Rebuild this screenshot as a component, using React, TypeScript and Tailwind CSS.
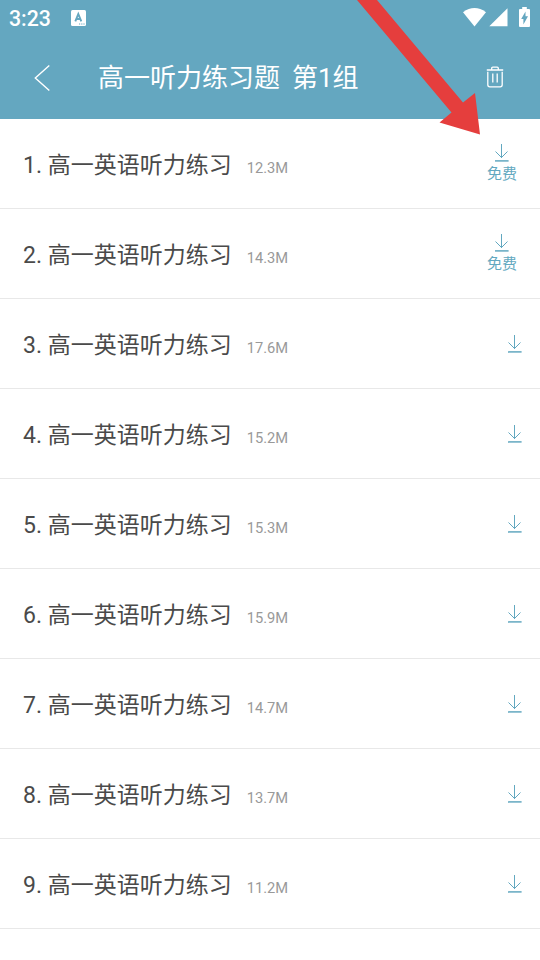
import React from "react";

type Track = {
  id: number;
  title: string;
  size: string;
  free?: boolean;
};

const tracks: Track[] = [
  { id: 1, title: "高一英语听力练习", size: "12.3M", free: true },
  { id: 2, title: "高一英语听力练习", size: "14.3M", free: true },
  { id: 3, title: "高一英语听力练习", size: "17.6M" },
  { id: 4, title: "高一英语听力练习", size: "15.2M" },
  { id: 5, title: "高一英语听力练习", size: "15.3M" },
  { id: 6, title: "高一英语听力练习", size: "15.9M" },
  { id: 7, title: "高一英语听力练习", size: "14.7M" },
  { id: 8, title: "高一英语听力练习", size: "13.7M" },
  { id: 9, title: "高一英语听力练习", size: "11.2M" },
];

const DownloadIcon: React.FC = () => (
  <svg width="14" height="18" viewBox="0 0 14 18" fill="none" stroke="#62a8c0">
    <path d="M6.5 0V14M0.5 7.5L6.5 13.5L12.5 7.5" strokeWidth="1" />
    <path d="M0 16.9H13.6" strokeWidth="1.5" />
  </svg>
);

const StatusBar: React.FC = () => (
  <div className="flex h-9 items-center pl-[9px] pr-[10px]">
    <span className="w-[62px] pt-0.5 text-[21.3px] font-medium leading-9">3:23</span>
    <svg width="15" height="16" viewBox="0 0 15 16">
      <rect width="15" height="16" rx="1.5" fill="#fff" />
      <path
        d="M4.3 11.4L7.3 4L10.3 11.4M5.3 9H9.3"
        fill="none"
        stroke="#64a7c0"
        strokeWidth="1.9"
      />
      <path d="M8 14H9.2M10.2 14H11.4M12.4 14H13.6" stroke="#64a7c0" strokeWidth="1.2" />
    </svg>
    <div className="mb-0.5 ml-auto flex items-center">
      <svg width="23" height="19" viewBox="0 0 23 19" fill="#fff">
        <path d="M0 4.2Q11.5 -4 23 4.2L11.5 18.5Z" />
      </svg>
      <svg className="ml-[3px]" width="19" height="19" viewBox="0 0 19 19" fill="#fff">
        <path d="M18.5 0.3V18.3H0.3Z" />
      </svg>
      <svg className="ml-[11px]" width="11" height="20" viewBox="0 0 11 20">
        <path
          d="M1 2H3.2V0H7.8V2H10Q11 2 11 3V19Q11 20 10 20H1Q0 20 0 19V3Q0 2 1 2Z"
          fill="#fff"
        />
        <path d="M6.5 4.6V9.3H9L4.4 17.4V12H2.2Z" fill="#64a7c0" />
      </svg>
    </div>
  </div>
);

const TitleBar: React.FC = () => (
  <div className="flex h-[83px] items-center pl-[34px] pr-[36px]">
    <svg width="16" height="28" viewBox="0 0 16 28" fill="none" stroke="#fff" strokeWidth="1.4">
      <path d="M15.3 1.5L1.3 14L15.3 26.5" />
    </svg>
    <h1 className="ml-12 whitespace-pre text-[26px] leading-10 [word-spacing:-0.5px]">
      高一听力练习题  第1组
    </h1>
    <svg
      className="mb-0.5 ml-auto"
      width="18"
      height="22"
      viewBox="0 0 18 22"
      fill="none"
      stroke="#fff"
      strokeWidth="1.3"
    >
      <path d="M0.8 4H17.2M5.7 3.8V2.3Q5.7 1.2 6.8 1.2H11.2Q12.3 1.2 12.3 2.3V3.8" />
      <path d="M1.8 5.8V18.8Q1.8 20.8 3.8 20.8H14.2Q16.2 20.8 16.2 18.8V5.8M6.8 7.5V16.5M11.2 7.5V16.5" />
    </svg>
  </div>
);

const TrackRow: React.FC<{ track: Track }> = ({ track }) => (
  <li className="flex h-[90px] items-center border-b border-[#e8e8e8] pl-[23px]">
    <span className="pt-1 text-[23px] leading-9 text-[#4a4a4a]">
      {track.id}. {track.title}
    </span>
    <span className="ml-[15px] mt-[9px] text-[14.7px] leading-5 text-[#999]">{track.size}</span>
    {track.free ? (
      <div className="ml-auto flex flex-col items-center pr-[23px]">
        <DownloadIcon />
        <span className="mt-[2px] text-[15px] leading-5 text-[#62a8c0]">免费</span>
      </div>
    ) : (
      <div className="ml-auto pr-[18px]">
        <DownloadIcon />
      </div>
    )}
  </li>
);

const App: React.FC = () => {
  return (
    <div className="relative h-[960px] w-[540px] overflow-hidden bg-white font-['Roboto','Noto_Sans_CJK_SC',sans-serif]">
      <header className="h-[119px] bg-[#64a7c0] text-white">
        <StatusBar />
        <TitleBar />
      </header>
      <ul>
        {tracks.map((track) => (
          <TrackRow key={track.id} track={track} />
        ))}
      </ul>

      {/* Arrow pointing at the first download button */}
      <svg
        className="pointer-events-none absolute left-[350px] top-0"
        width="140"
        height="140"
        viewBox="0 0 140 140"
      >
        <path d="M7 0H27L113 102.5L125 93L130 134.5L89.5 122.5L101.5 112.5Z" fill="#e53e3d" />
      </svg>
    </div>
  );
};

export default App;
